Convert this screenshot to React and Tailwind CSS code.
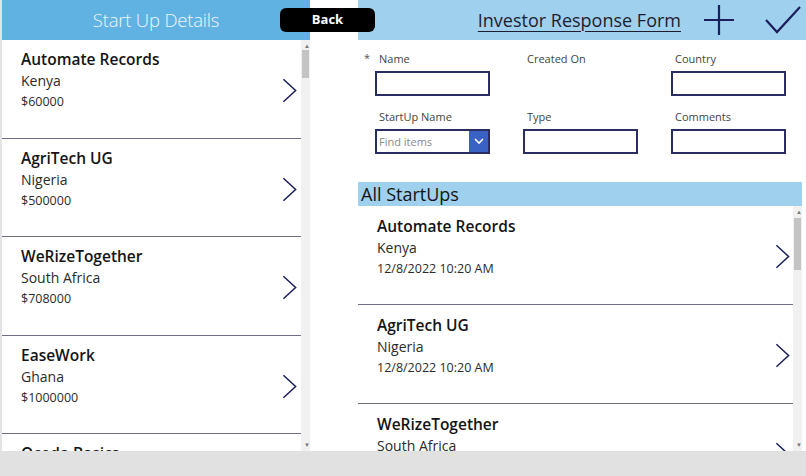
const startups = [
  { name: "Automate Records", country: "Kenya", amount: "$60000" },
  { name: "AgriTech UG", country: "Nigeria", amount: "$500000" },
  { name: "WeRizeTogether", country: "South Africa", amount: "$708000" },
  { name: "EaseWork", country: "Ghana", amount: "$1000000" },
  { name: "Ocoda Basics", country: "Kenya", amount: "$20000" },
];

const responses = [
  { name: "Automate Records", country: "Kenya", date: "12/8/2022 10:20 AM" },
  { name: "AgriTech UG", country: "Nigeria", date: "12/8/2022 10:20 AM" },
  { name: "WeRizeTogether", country: "South Africa", date: "12/8/2022 10:20 AM" },
];

function Chevron({ className }) {
  return (
    <svg className={className} viewBox="0 0 16 26" fill="none">
      <path d="M1.5 1 L14.5 13 L1.5 25" stroke="#1c1f5c" strokeWidth="1.6" />
    </svg>
  );
}

function ScrollBar({ thumbTop, thumbHeight }) {
  return (
    <div className="relative w-[9px] bg-[#f1f1f1] shrink-0">
      <div className="absolute left-[3px] top-[3px] text-[6px] leading-none text-[#777]">▲</div>
      <div
        className="absolute left-[1px] w-[7px] bg-[#c4c4c4]"
        style={{ top: thumbTop, height: thumbHeight }}
      />
      <div className="absolute left-[3px] bottom-[3px] text-[6px] leading-none text-[#777]">▼</div>
    </div>
  );
}

function Field({ label, required, children }) {
  return (
    <div className="relative w-[148px] pl-[17px]">
      {required && (
        <span className="absolute left-[6px] top-[3px] text-[11px] text-[#555]">*</span>
      )}
      <div className="pl-[4px] h-[22px] pt-[1px] text-[11px] leading-[22px] text-[#444]">{label}</div>
      <div className="mt-[2px] h-[25px]">{children}</div>
    </div>
  );
}

function Box() {
  return <div className="w-[115px] h-[25px] border-2 border-[#2b2c62] bg-white" />;
}

export default function App() {
  return (
    <div
      className="w-[806px] h-[476px] bg-[#e1e1e1] overflow-hidden relative"
      style={{ fontFamily: '"Open Sans", "Noto Sans", sans-serif' }}
    >
      <div className="flex h-[451px] bg-white overflow-hidden">
        {/* left panel */}
        <div className="w-[2px] bg-[#e3e3e3]" />
        <div className="w-[308px] flex flex-col">
          <div className="h-[40px] bg-[#60b2e2] flex items-center justify-center">
            <span className="text-[18.5px] font-light text-[#eef7fc] tracking-[-0.2px]">Start Up Details</span>
          </div>
          <div className="flex flex-1 overflow-hidden">
            <div className="flex-1 overflow-hidden">
              {startups.map((s) => (
                <div key={s.name} className="h-[98.5px] shrink-0 border-b border-[#6e6f86] relative pl-[19px] pt-[7px]">
                  <div className="text-[15.5px] leading-[24px] font-semibold text-[#141414]">{s.name}</div>
                  <div className="text-[14px] leading-[20px] text-[#2b2b2b] mt-[0px]">{s.country}</div>
                  <div className="text-[12.5px] leading-[20px] text-[#2b2b2b] mt-[1px]">{s.amount}</div>
                  <Chevron className="absolute right-[4px] top-[38px] w-[15px] h-[25px]" />
                </div>
              ))}
            </div>
            <ScrollBar thumbTop={10} thumbHeight={28} />
          </div>
        </div>

        <div className="w-[48px]" />

        {/* right panel */}
        <div className="w-[448px] flex flex-col">
          <div className="h-[40px] bg-[#9fd0ee] flex items-center justify-end pr-[5px]">
            <span className="text-[18px] text-[#1d1d2e] underline underline-offset-[4px] decoration-1 mr-[22px]">
              Investor Response Form
            </span>
            <svg className="w-[32px] h-[32px] mr-[30px]" viewBox="0 0 32 32" fill="none">
              <path d="M16 1 V31 M1 16 H31" stroke="#1c1f5c" strokeWidth="2.2" />
            </svg>
            <svg className="w-[36px] h-[30px]" viewBox="0 0 36 30" fill="none">
              <path d="M1 15 L12 27 L35 2" stroke="#1c1f5c" strokeWidth="2.2" />
            </svg>
          </div>

          <div className="pt-[7px] flex">
            <Field label="Name" required><Box /></Field>
            <Field label="Created On"><div /></Field>
            <Field label="Country"><Box /></Field>
          </div>
          <div className="pt-[9px] flex">
            <Field label="StartUp Name">
              <div className="w-[115px] h-[25px] border-2 border-[#2b2c62] bg-white flex">
                <span className="flex-1 text-[11px] leading-[21px] pl-[2px] text-[#8a8a8a]">Find items</span>
                <div className="w-[19px] bg-[#3a62c4] flex items-center justify-center">
                  <svg className="w-[10px] h-[7px]" viewBox="0 0 10 7" fill="none">
                    <path d="M1 1 L5 5 L9 1" stroke="white" strokeWidth="1.6" />
                  </svg>
                </div>
              </div>
            </Field>
            <Field label="Type"><Box /></Field>
            <Field label="Comments"><Box /></Field>
          </div>

          <div className="mt-[28px] w-[444px] h-[24px] bg-[#9fd0ee] flex items-center pl-[3px]">
            <span className="text-[18px] text-[#141414]">All StartUps</span>
          </div>
          <div className="flex flex-1 w-[444px] overflow-hidden">
            <div className="flex-1 overflow-hidden">
              {responses.map((r) => (
                <div key={r.name} className="h-[99px] shrink-0 border-b border-[#6e6f86] relative pl-[19px] pt-[8px]">
                  <div className="text-[15.5px] leading-[24px] font-semibold text-[#141414]">{r.name}</div>
                  <div className="text-[14px] leading-[20px] text-[#2b2b2b] mt-[0px]">{r.country}</div>
                  <div className="text-[12.5px] leading-[20px] text-[#2b2b2b] mt-[1px]">{r.date}</div>
                  <Chevron className="absolute right-[3px] top-[38px] w-[15px] h-[25px]" />
                </div>
              ))}
            </div>
            <ScrollBar thumbTop={12} thumbHeight={52} />
          </div>
        </div>
      </div>

      <button className="absolute left-[280px] top-[8px] w-[95px] h-[24px] rounded-[6px] bg-black text-white text-[13px] font-bold">
        Back
      </button>
    </div>
  );
}
